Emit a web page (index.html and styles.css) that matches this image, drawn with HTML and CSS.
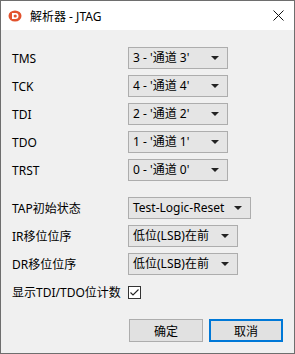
FILE: index.html
```html
<!DOCTYPE html>
<html lang="zh-CN">
<head>
    <meta charset="UTF-8">
    <title>解析器 - JTAG</title>
    <link rel="stylesheet" href="styles.css">
</head>
<body>
    <div class="window">
        <div class="titlebar">
            <svg class="app-icon" width="14" height="12" viewBox="0 0 14 12">
                <ellipse cx="7" cy="6" rx="6.5" ry="5.5" fill="#e2522d"/>
                <path d="M4 3 H7.5 A3 3 0 0 1 7.5 9 H4 Z" fill="#fff"/>
                <circle cx="7.2" cy="6" r="1.6" fill="#e2522d"/>
            </svg>
            <span class="title">解析器 - JTAG</span>
            <svg class="close" width="11" height="11" viewBox="0 0 11 11">
                <path d="M0.5 0.5 L10.5 10.5 M10.5 0.5 L0.5 10.5" stroke="#111" stroke-width="1"/>
            </svg>
        </div>

        <div class="content">
            <div class="group">
                <div class="row"><span class="label">TMS</span><div class="combo">3 - '通道 3'<i class="arrow"></i></div></div>
                <div class="row"><span class="label">TCK</span><div class="combo">4 - '通道 4'<i class="arrow"></i></div></div>
                <div class="row"><span class="label">TDI</span><div class="combo">2 - '通道 2'<i class="arrow"></i></div></div>
                <div class="row"><span class="label">TDO</span><div class="combo">1 - '通道 1'<i class="arrow"></i></div></div>
                <div class="row"><span class="label">TRST</span><div class="combo">0 - '通道 0'<i class="arrow"></i></div></div>
            </div>

            <div class="group options">
                <div class="row"><span class="label">TAP初始状态</span><div class="combo wide">Test-Logic-Reset<i class="arrow"></i></div></div>
                <div class="row"><span class="label">IR移位位序</span><div class="combo mid">低位(LSB)在前<i class="arrow"></i></div></div>
                <div class="row"><span class="label">DR移位位序</span><div class="combo mid">低位(LSB)在前<i class="arrow"></i></div></div>
                <div class="row">
                    <span class="label">显示TDI/TDO位计数</span>
                    <span class="checkbox">
                        <svg width="11" height="11" viewBox="0 0 11 11">
                            <path d="M1.5 5.5 L4 8 L9.5 2.5" stroke="#222" stroke-width="1.1" fill="none"/>
                        </svg>
                    </span>
                </div>
            </div>

            <div class="buttons">
                <button class="btn">确定</button>
                <button class="btn default">取消</button>
            </div>
        </div>
    </div>
</body>
</html>
```

FILE: styles.css
```css
* {
    margin: 0;
    padding: 0;
    box-sizing: border-box;
}

body {
    font-family: "Noto Sans", "Noto Sans CJK SC", sans-serif;
    font-size: 12px;
    color: #000;
    background: #fff;
}

.window {
    width: 295px;
    height: 354px;
    border: 1px solid #6e6e6e;
    background: #f0f0f0;
    display: flex;
    flex-direction: column;
}

.titlebar {
    height: 29px;
    background: #fff;
    display: flex;
    align-items: center;
    padding-left: 7px;
    padding-right: 10px;
}

.app-icon {
    margin-right: 8px;
}

.title {
    flex-grow: 1;
    font-size: 12px;
    margin-top: 1px;
}

.content {
    flex-grow: 1;
    padding: 17px 11px 0 11px;
    display: flex;
    flex-direction: column;
}

.group .row {
    display: flex;
    align-items: center;
    height: 22px;
    margin-bottom: 6px;
}

.options {
    margin-top: 10px;
}

.label {
    width: 116px;
    flex-shrink: 0;
}

.combo {
    position: relative;
    width: 100px;
    height: 22px;
    line-height: 20px;
    padding-left: 4px;
    background: #e5e5e5;
    border: 1px solid #adadad;
    white-space: nowrap;
}

.combo.wide {
    width: 123px;
}

.combo.mid {
    width: 110px;
}

.arrow {
    position: absolute;
    right: 8px;
    top: 8px;
    width: 0;
    height: 0;
    border-left: 4px solid transparent;
    border-right: 4px solid transparent;
    border-top: 4px solid #222;
}

.checkbox {
    width: 13px;
    height: 13px;
    border: 1px solid #333;
    background: #fff;
    display: flex;
    align-items: center;
    justify-content: center;
}

.buttons {
    display: flex;
    justify-content: flex-end;
    gap: 6px;
    margin-top: 10px;
}

.btn {
    width: 74px;
    height: 23px;
    font-family: inherit;
    font-size: 12px;
    background: #e1e1e1;
    border: 1px solid #adadad;
    color: #000;
}

.btn.default {
    border: 2px solid #0078d7;
}
```
